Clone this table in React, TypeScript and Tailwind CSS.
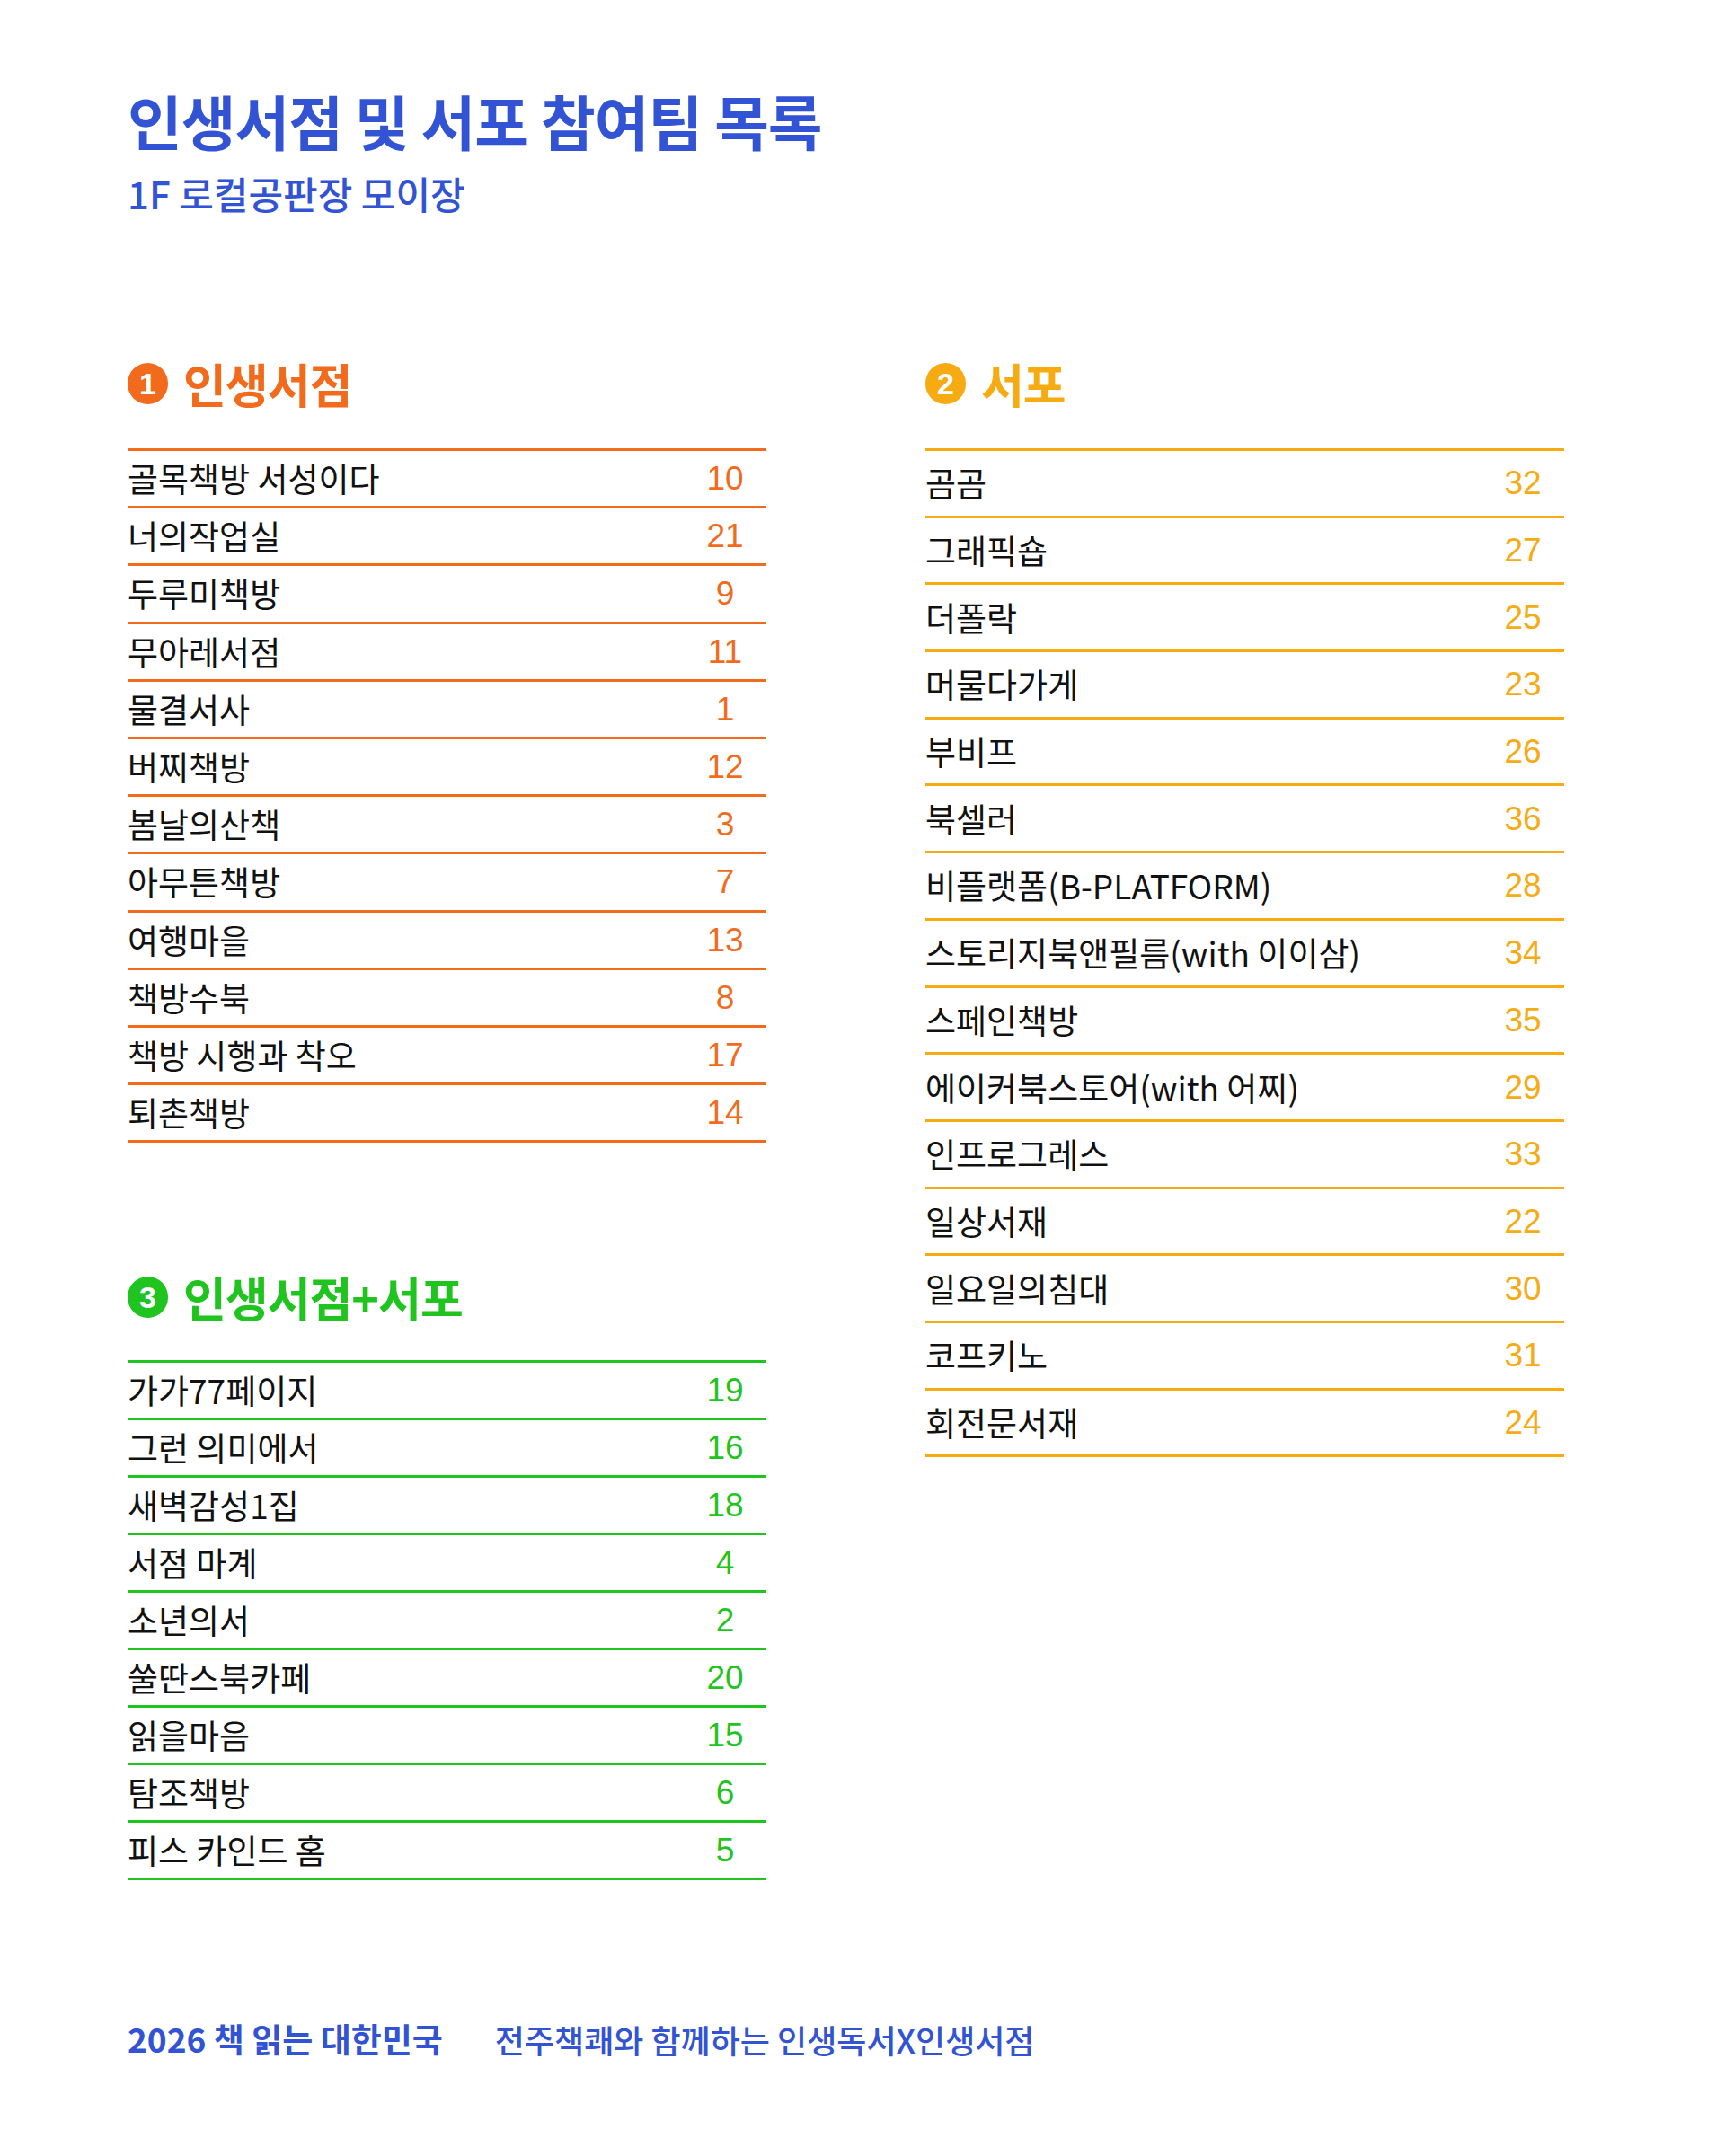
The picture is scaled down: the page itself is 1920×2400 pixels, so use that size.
const KR = "font-['Noto_Sans_CJK_KR','Noto_Sans',sans-serif]";

const shops = [
  ["골목책방 서성이다", "10"],
  ["너의작업실", "21"],
  ["두루미책방", "9"],
  ["무아레서점", "11"],
  ["물결서사", "1"],
  ["버찌책방", "12"],
  ["봄날의산책", "3"],
  ["아무튼책방", "7"],
  ["여행마을", "13"],
  ["책방수북", "8"],
  ["책방 시행과 착오", "17"],
  ["퇴촌책방", "14"],
];

const presses = [
  ["곰곰", "32"],
  ["그래픽숍", "27"],
  ["더폴락", "25"],
  ["머물다가게", "23"],
  ["부비프", "26"],
  ["북셀러", "36"],
  ["비플랫폼(B-PLATFORM)", "28"],
  ["스토리지북앤필름(with 이이삼)", "34"],
  ["스페인책방", "35"],
  ["에이커북스토어(with 어찌)", "29"],
  ["인프로그레스", "33"],
  ["일상서재", "22"],
  ["일요일의침대", "30"],
  ["코프키노", "31"],
  ["회전문서재", "24"],
];

const both = [
  ["가가77페이지", "19"],
  ["그런 의미에서", "16"],
  ["새벽감성1집", "18"],
  ["서점 마계", "4"],
  ["소년의서", "2"],
  ["쑬딴스북카페", "20"],
  ["읽을마음", "15"],
  ["탐조책방", "6"],
  ["피스 카인드 홈", "5"],
];

type Tone = "orange" | "amber" | "green";

const tones: Record<Tone, { text: string; bg: string; border: string }> = {
  orange: { text: "text-[#f26b1d]", bg: "bg-[#f26b1d]", border: "border-[#f26b1d]" },
  amber: { text: "text-[#f7ab12]", bg: "bg-[#f7ab12]", border: "border-[#f7ab12]" },
  green: { text: "text-[#1fc41f]", bg: "bg-[#1fc41f]", border: "border-[#1fc41f]" },
};

const Heading = ({ num, label, tone }: { num: string; label: string; tone: Tone }) => (
  <div className="flex items-center gap-[17px] h-[56px]">
    <span
      className={`${tones[tone].bg} w-[45px] h-[46px] rounded-full flex items-center justify-center text-white text-[34px] font-bold font-['Liberation_Sans',sans-serif] leading-none`}
    >
      {num}
    </span>
    <span className={`${KR} ${tones[tone].text} text-[52px] font-bold leading-none tracking-[-1px]`}>{label}</span>
  </div>
);

const List = ({ items, tone, rowH }: { items: string[][]; tone: Tone; rowH: string }) => (
  <div className={`border-b-[3px] ${tones[tone].border}`}>
    {items.map(([name, n]) => (
      <div key={name} className={`flex items-center border-t-[3px] ${tones[tone].border} ${rowH}`}>
        <span className={`flex-1 ${KR} text-[37px] font-normal text-[#111] leading-none`}>{name}</span>
        <span
          className={`w-[72px] mr-[10px] text-center ${tones[tone].text} font-['Liberation_Sans',sans-serif] text-[37px] leading-none`}
        >
          {n}
        </span>
      </div>
    ))}
  </div>
);

export default function App() {
  return (
    <div className="w-[1920px] h-[2400px] bg-white pl-[142px] pt-[100px] flex flex-col">
      <h1 className={`${KR} text-[#3253d3] text-[66px] font-bold leading-none tracking-[-1px]`}>
        인생서점 및 서포 참여팀 목록
      </h1>
      <p className={`${KR} text-[#3253d3] text-[42px] font-medium leading-none mt-[28px]`}>
        1F 로컬공판장 모이장
      </p>

      <div className="flex gap-[177px] mt-[163px]">
        <div className="w-[711px] flex flex-col">
          <Heading num="1" label="인생서점" tone="orange" />
          <div className="mt-[44px]">
            <List items={shops} tone="orange" rowH="h-[64.2px]" />
          </div>
          <div className="mt-[144px]">
            <Heading num="3" label="인생서점+서포" tone="green" />
          </div>
          <div className="mt-[42px]">
            <List items={both} tone="green" rowH="h-[64px]" />
          </div>
        </div>

        <div className="w-[711px] flex flex-col">
          <Heading num="2" label="서포" tone="amber" />
          <div className="mt-[44px]">
            <List items={presses} tone="amber" rowH="h-[74.7px]" />
          </div>
        </div>
      </div>

      <div className={`mt-auto mb-[112px] flex items-center gap-[58px] ${KR} text-[#3253d3] leading-none`}>
        <span className="font-bold text-[37px]">2026 책 읽는 대한민국</span>
        <span className="font-medium text-[36px]">전주책쾌와 함께하는 인생독서X인생서점</span>
      </div>
    </div>
  );
}
